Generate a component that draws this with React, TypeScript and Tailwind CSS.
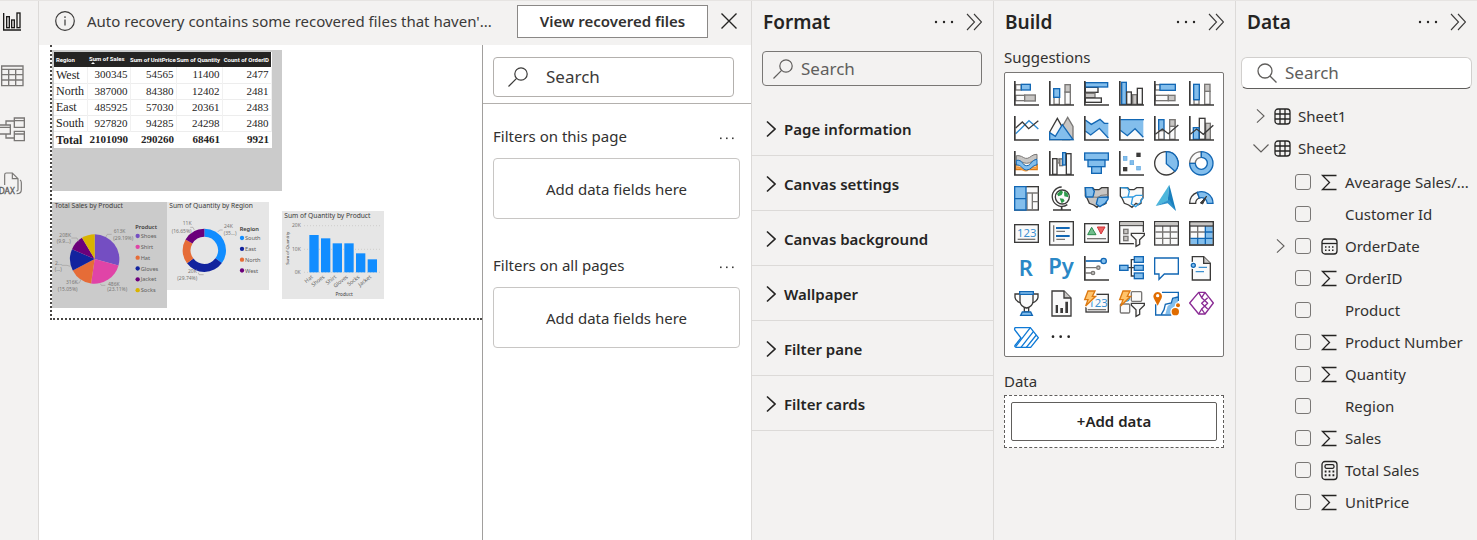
import type { ReactNode } from "react";

const INK = "#3b3a39";
const BLUE = "#1267b4";
const SKY = "#83beec";
const GREY = "#797775";
const SILVER = "#c8c6c4";
const PAPER = "#fafafa";

/* ---------- shared glyphs ---------- */

function Dots({ label }: { label: string }) {
  return (
    <button type="button" aria-label={label} className="flex h-6 w-5 items-center">
      <svg viewBox="0 0 20 4" className="h-1 w-5" fill="#252423">
        <circle cx="2" cy="2" r="1.2" />
        <circle cx="10" cy="2" r="1.2" />
        <circle cx="18" cy="2" r="1.2" />
      </svg>
    </button>
  );
}

function SmallDots({ label }: { label: string }) {
  return (
    <button type="button" aria-label={label} className="flex h-6 w-4 items-center pt-1">
      <svg viewBox="0 0 16 4" className="h-1 w-4" fill="#3b3a39">
        <rect x="1" y="1.5" width="1.6" height="1.6" />
        <rect x="7" y="1.5" width="1.6" height="1.6" />
        <rect x="13" y="1.5" width="1.6" height="1.6" />
      </svg>
    </button>
  );
}

function Collapse() {
  return (
    <button type="button" aria-label="Collapse pane" className="flex h-6 w-4 items-center">
      <svg viewBox="0 0 16 18" className="h-[18px] w-4" fill="none" stroke="#3b3a39" strokeWidth="1.1">
        <path d="M1 1l7.5 8L1 17M8 1l7.5 8L8 17" />
      </svg>
    </button>
  );
}

function Chevron({ className, width }: { className: string; width: string }) {
  return (
    <svg viewBox="0 0 10 18" className={className} fill="none" stroke="currentColor" strokeWidth={width}>
      <path d="M1 1.5l8 7.5-8 7.5" />
    </svg>
  );
}

function SearchLeft({ className }: { className: string }) {
  return (
    <svg viewBox="0 0 20 20" className={className} fill="none" stroke="currentColor" strokeWidth="1.2">
      <circle cx="13" cy="7" r="6.2" />
      <path d="M8.6 11.4L.5 19.5" />
    </svg>
  );
}

/* ---------- navigation rail ---------- */

const railItems: { name: string; art: ReactNode }[] = [
  {
    name: "Report view",
    art: (
      <g stroke="#1b1a19" strokeWidth="4">
        <path d="M11 12V63H63" />
        <rect x="20" y="23" width="8" height="33" />
        <rect x="35" y="33" width="8" height="23" />
        <rect x="51" y="12" width="9" height="44" />
      </g>
    ),
  },
  {
    name: "Table view",
    art: (
      <g stroke="#797775" strokeWidth="4">
        <path d="M5 9H69V68H5ZM5 19H69M5 35H69M5 51H69M26 19V68M47 19V68" />
      </g>
    ),
  },
  {
    name: "Model view",
    art: (
      <g stroke="#797775" strokeWidth="4">
        <path d="M-2 24H31V51H-2ZM-2 31H31M43 3H73V31H43ZM43 11H73M43 43H73V71H43ZM43 51H73M18 24V12H43M18 51V63H43" />
      </g>
    ),
  },
  {
    name: "DAX query view",
    art: (
      <g stroke="#797775" strokeWidth="3.5">
        <path d="M14 42V11Q14 6 19 6H37L54 23V57Q54 60 49 60M37 6V23H54M60 27Q64 29 64 35V56Q64 68 50 68" />
        <text x="-4" y="68" fill="#605e5c" stroke="#605e5c" strokeWidth="1" fontSize="25">
          DAX
        </text>
      </g>
    ),
  },
];

function Rail() {
  return (
    <nav className="flex w-[39px] shrink-0 flex-col gap-[29px] border-r border-[#dcdad8] pt-2">
      {railItems.map((item) => (
        <button key={item.name} type="button" aria-label={item.name} className="h-[25px] w-[25px]">
          <svg viewBox="0 0 75 75" className="h-[25px] w-[25px]" fill="none">
            {item.art}
          </svg>
        </button>
      ))}
    </nav>
  );
}

/* ---------- recovery bar ---------- */

function RecoveryBar() {
  return (
    <div className="flex h-11 items-center pr-[13px] pb-1 pl-4">
      <svg viewBox="0 0 20 20" className="mr-3 size-5 shrink-0" fill="none" stroke="#3b3a39" strokeWidth="1.2">
        <circle cx="10" cy="10" r="9.3" />
        <path d="M10 8.5V14.5M10 5.3V6.9" />
      </svg>
      <span className="min-w-0 flex-1 text-[15px] whitespace-nowrap text-[#3b3a39]">
        Auto recovery contains some recovered files that haven'...
      </span>
      <button
        type="button"
        className="mr-3 h-[33px] w-[191px] shrink-0 border border-[#8a8886] bg-white text-[15px] font-semibold whitespace-nowrap text-[#323130]"
      >
        View recovered files
      </button>
      <button type="button" aria-label="Close" className="shrink-0">
        <svg viewBox="0 0 18 18" className="size-[18px]" stroke="#252423" strokeWidth="1.4">
          <path d="M1.5 1.5l15 15M16.5 1.5l-15 15" />
        </svg>
      </button>
    </div>
  );
}

/* ---------- report canvas ---------- */

const regionRows = [
  ["West", "300345", "54565", "11400", "2477"],
  ["North", "387000", "84380", "12402", "2481"],
  ["East", "485925", "57030", "20361", "2483"],
  ["South", "927820", "94285", "24298", "2480"],
];

function RegionTable() {
  return (
    <div className="absolute top-[5px] left-0 h-[141px] w-[230px] bg-[#cbcbcb] pt-0.5 pl-0.5">
      <table className="w-[217px] table-fixed border-collapse bg-white font-['Liberation_Serif',serif] text-[11px] leading-none text-[#252423]">
        <colgroup>
          <col className="w-[33px]" />
          <col className="w-[43px]" />
          <col className="w-[46px]" />
          <col className="w-[46px]" />
          <col className="w-[49px]" />
        </colgroup>
        <thead>
          <tr className="h-[15px] bg-[#252423] font-['Roboto',sans-serif] text-[6px] whitespace-nowrap text-white">
            <th className="pl-0.5 text-left">Region</th>
            <th className="pl-0.5 text-left">
              Sum of Sales
              <svg viewBox="0 0 4 2" className="ml-0.5 h-0.5 w-1" fill="white">
                <path d="M0 2L2 0L4 2Z" />
              </svg>
            </th>
            <th className="pr-0.5 text-right">Sum of UnitPrice</th>
            <th className="pr-0.5 text-right">Sum of Quantity</th>
            <th className="pr-0.5 text-right">Count of OrderID</th>
          </tr>
        </thead>
        <tbody>
          {regionRows.map((row) => (
            <tr key={row[0]} className="h-4 border-b border-[#ededed]">
              <td className="border-r border-[#f1f1f1] pl-0.5 text-xs leading-none">{row[0]}</td>
              {row.slice(1).map((value) => (
                <td key={value} className="border-r border-[#f1f1f1] pr-0.5 text-right">
                  {value}
                </td>
              ))}
            </tr>
          ))}
        </tbody>
        <tfoot>
          <tr className="h-[17px] border-t border-[#b5cfec] font-bold">
            <td className="pl-0.5 text-xs leading-none">Total</td>
            <td className="pr-0.5 text-right">2101090</td>
            <td className="pr-0.5 text-right">290260</td>
            <td className="pr-0.5 text-right">68461</td>
            <td className="pr-0.5 text-right">9921</td>
          </tr>
        </tfoot>
      </table>
    </div>
  );
}

type Slice = { name: string; share: number; color: string };

const productSlices: Slice[] = [
  { name: "Shoes", share: 29.19, color: "#744ec2" },
  { name: "Shirt", share: 23.11, color: "#e044a7" },
  { name: "Hat", share: 15.05, color: "#e66c37" },
  { name: "Gloves", share: 14.15, color: "#12239e" },
  { name: "Jacket", share: 9.9, color: "#6b007b" },
  { name: "Socks", share: 8.6, color: "#d9b300" },
];

const regionSlices: Slice[] = [
  { name: "South", share: 35, color: "#118dff" },
  { name: "East", share: 29.74, color: "#12239e" },
  { name: "North", share: 18.61, color: "#e66c37" },
  { name: "West", share: 16.65, color: "#6b007b" },
];

function arcs(slices: Slice[], cx: number, cy: number, outer: number, inner: number) {
  let sum = 0;
  return slices.map((slice) => {
    const a = (sum / 100) * Math.PI * 2;
    sum += slice.share;
    const b = (sum / 100) * Math.PI * 2;
    const at = (angle: number, r: number) =>
      `${(cx + Math.sin(angle) * r).toFixed(1)} ${(cy - Math.cos(angle) * r).toFixed(1)}`;
    const d = `M${at(a, outer)}A${outer} ${outer} 0 0 1 ${at(b, outer)}L${at(b, inner)}A${inner} ${inner} 0 0 0 ${at(a, inner)}Z`;
    return <path key={slice.name} d={d} fill={slice.color} />;
  });
}

function Legend({ slices, x, y, step, title }: { slices: Slice[]; x: number; y: number; step: number; title: string }) {
  return (
    <g fill="#605e5c" fontSize="17">
      <text x={x} y={y} fontWeight="600" fill="#3b3a39">
        {title}
      </text>
      {slices.map((slice, i) => (
        <g key={slice.name}>
          <circle cx={x + 7} cy={y + 21 + i * step} r="6.5" fill={slice.color} />
          <text x={x + 16} y={y + 27 + i * step}>
            {slice.name}
          </text>
        </g>
      ))}
    </g>
  );
}

function ProductPie() {
  return (
    <figure className="absolute top-[157px] left-0 h-[106px] w-[115px] bg-[#cbcbcb]">
      <svg viewBox="0 0 345 318" className="h-full w-full">
        <text x="8" y="18" fontSize="20" fill="#3b3a39">
          Total Sales by Product
        </text>
        {arcs(productSlices, 128, 171, 74, 0)}
        <path
          d="M161 105L166 97H179M80 118L75 108H58M55 193L45 190H29M87 232L82 243H74M145 245L148 250H160"
          fill="none"
          stroke="#a19f9d"
          strokeWidth="2"
        />
        <g fontSize="15" fill="#797775">
          <text x="185" y="94">613K</text>
          <text x="184" y="115">(29.19%)</text>
          <text x="22" y="106">208K</text>
          <text x="14" y="124">(9.9...)</text>
          <text x="9" y="188">2...</text>
          <text x="8" y="207">(...)</text>
          <text x="42" y="245">316K</text>
          <text x="17" y="266">(15.05%)</text>
          <text x="168" y="251">486K</text>
          <text x="166" y="268">(23.11%)</text>
        </g>
        <Legend slices={productSlices} x={250} y={81} step={32.5} title="Product" />
      </svg>
    </figure>
  );
}

function RegionDonut() {
  return (
    <figure className="absolute top-[157px] left-[115px] h-[88px] w-[102px] bg-[#e6e6e6]">
      <svg viewBox="0 0 306 264" className="h-full w-full">
        <text x="7" y="18" fontSize="20" fill="#3b3a39">
          Sum of Quantity by Region
        </text>
        {arcs(regionSlices, 112, 145, 65, 41)}
        <path
          d="M152 90L158 84H167M82 84L78 76H70M94 212L96 218H110"
          fill="none"
          stroke="#a19f9d"
          strokeWidth="2"
        />
        <g fontSize="15" fill="#797775">
          <text x="47" y="70">11K</text>
          <text x="14" y="92">(16.65%)</text>
          <text x="171" y="79">24K</text>
          <text x="170" y="100">(35...)</text>
          <text x="63" y="214">20K</text>
          <text x="31" y="235">(29.74%)</text>
        </g>
        <Legend slices={regionSlices} x={218} y={87} step={32.5} title="Region" />
      </svg>
    </figure>
  );
}

const quantityBars = [
  { name: "Hat", top: 72 },
  { name: "Shoes", top: 82 },
  { name: "Shirt", top: 97 },
  { name: "Gloves", top: 97 },
  { name: "Socks", top: 127 },
  { name: "Jacket", top: 145 },
];

function QuantityBars() {
  return (
    <figure className="absolute top-[166px] left-[230px] h-[88px] w-[102px] bg-[#e6e6e6]">
      <svg viewBox="0 0 306 264" className="h-full w-full">
        <text x="7" y="20" fontSize="20" fill="#3b3a39">
          Sum of Quantity by Product
        </text>
        <path d="M66 44H298M66 115H298M66 184H298" stroke="#c4c2c0" strokeWidth="2" strokeDasharray="3 6" />
        <g fontSize="15" fill="#797775">
          <text x="30" y="49">20K</text>
          <text x="30" y="120">10K</text>
          <text x="38" y="189">0K</text>
        </g>
        {quantityBars.map((bar, i) => (
          <g key={bar.name}>
            <rect x={82 + i * 35} y={bar.top} width="28" height={184 - bar.top} fill="#118dff" />
            <text
              transform={`translate(${94 + i * 35} 200) rotate(-38)`}
              textAnchor="end"
              fontSize="16"
              fill="#605e5c"
            >
              {bar.name}
            </text>
          </g>
        ))}
        <text transform="translate(20 112) rotate(-90)" textAnchor="middle" fontSize="13" fill="#3b3a39">
          Sum of Quantity
        </text>
        <text x="186" y="255" textAnchor="middle" fontSize="14" fill="#3b3a39">
          Product
        </text>
      </svg>
    </figure>
  );
}

function Canvas() {
  return (
    <section aria-label="Report canvas" className="min-w-0 flex-1 overflow-hidden bg-white pl-[11px]">
      <div className="relative h-[275px] border-b-2 border-l-2 border-dotted border-[#484644]">
        <RegionTable />
        <ProductPie />
        <RegionDonut />
        <QuantityBars />
      </div>
    </section>
  );
}

/* ---------- filters pane ---------- */

function FilterGroup({ title }: { title: string }) {
  return (
    <section className="pt-5 pb-3.5">
      <div className="flex h-6 items-center justify-between pr-[5px]">
        <h2 className="text-[15px]">{title}</h2>
        <SmallDots label={`${title} options`} />
      </div>
      <div className="mt-2.5 h-[61px] rounded-sm border border-[#c8c6c4] pt-px text-center text-[15px] leading-[59px]">
        Add data fields here
      </div>
    </section>
  );
}

function FiltersPane() {
  return (
    <aside className="w-[269px] shrink-0 border-l border-[#a19f9d] bg-white text-[#323130]">
      <div className="border-b border-[#b3b0ad] pt-3 pr-[17px] pb-1.5 pl-2.5">
        <label className="flex h-10 items-center gap-[18px] rounded-sm border border-[#b3b0ad] px-3.5">
          <SearchLeft className="size-5 shrink-0 text-[#3b3a39]" />
          <input
            aria-label="Search filters"
            placeholder="Search"
            className="w-full min-w-0 text-[17px] outline-none placeholder:text-[#3b3a39]"
          />
        </label>
      </div>
      <div className="pr-[11px] pl-2.5">
        <FilterGroup title="Filters on this page" />
        <FilterGroup title="Filters on all pages" />
      </div>
    </aside>
  );
}

/* ---------- right-hand panes ---------- */

function PaneHeader({ title }: { title: string }) {
  return (
    <header className="flex h-[42px] items-center pr-[11px] pl-[11px]">
      <h1 className="flex-1 text-[19px] font-semibold text-[#252423]">{title}</h1>
      <Dots label={`${title} options`} />
      <span className="w-3" />
      <Collapse />
    </header>
  );
}

const formatSections = [
  "Page information",
  "Canvas settings",
  "Canvas background",
  "Wallpaper",
  "Filter pane",
  "Filter cards",
];

function FormatPane() {
  return (
    <aside className="w-[242px] shrink-0 border-l border-[#dcdad8]">
      <PaneHeader title="Format" />
      <label className="mt-2 mr-[11px] ml-2.5 flex h-[35px] items-center gap-2 rounded-sm border border-[#797775] px-2.5">
        <SearchLeft className="size-5 shrink-0 text-[#605e5c]" />
        <input
          aria-label="Search format options"
          placeholder="Search"
          className="w-full min-w-0 bg-transparent text-[17px] outline-none placeholder:text-[#605e5c]"
        />
      </label>
      <div className="mt-[15px]">
        {formatSections.map((name) => (
          <button
            key={name}
            type="button"
            className="flex h-[55px] w-full items-center gap-2 border-b border-[#dcdad8] pt-0.5 pl-3.5 text-[15px] font-semibold text-[#252423]"
          >
            <Chevron className="h-[18px] w-2.5" width="1.7" />
            {name}
          </button>
        ))}
      </div>
    </aside>
  );
}

const axis = <path d="M2.5 0V72H75" fill="none" stroke={INK} strokeWidth="5" />;
const blueArt = { fill: SKY, stroke: BLUE, strokeWidth: 4 };
const greyArt = { fill: SILVER, stroke: GREY, strokeWidth: 4 };
const inkArt = { fill: PAPER, stroke: INK, strokeWidth: 4 };
const bolt = <path d="M12 0H33L25 16H35L5 45L12 26H2Z" fill="#ffc36b" stroke="#dd7a12" strokeWidth="4" />;
const funnel = (x: number, y: number) => (
  <path
    transform={`translate(${x} ${y})`}
    d="M0 0H39V6L25 19V33L14 39V19L0 6Z"
    {...inkArt}
  />
);

const visuals: { name: string; art: ReactNode }[] = [
  {
    name: "Stacked bar chart",
    art: (
      <>
        <rect x="5" y="11" width="17" height="16" {...greyArt} fill={PAPER} />
        <rect x="22" y="10" width="27" height="17" {...blueArt} />
        <rect x="5" y="43" width="27" height="16" {...greyArt} fill={PAPER} />
        <rect x="32" y="42" width="32" height="18" {...greyArt} />
        {axis}
      </>
    ),
  },
  {
    name: "Stacked column chart",
    art: (
      <>
        <rect x="15" y="48" width="16" height="22" {...greyArt} fill={PAPER} />
        <rect x="14" y="23" width="18" height="26" {...blueArt} />
        <rect x="48" y="33" width="16" height="37" {...greyArt} fill={PAPER} />
        <rect x="48" y="11" width="16" height="22" {...greyArt} />
        {axis}
      </>
    ),
  },
  {
    name: "Clustered bar chart",
    art: (
      <>
        <rect x="4" y="19" width="38" height="15" {...inkArt} />
        <rect x="4" y="5" width="67" height="13" {...blueArt} />
        <rect x="4" y="37" width="29" height="13" {...greyArt} />
        <rect x="4" y="51" width="48" height="13" {...inkArt} />
        {axis}
      </>
    ),
  },
  {
    name: "Clustered column chart",
    art: (
      <>
        <rect x="8" y="4" width="14" height="66" {...blueArt} />
        <rect x="23" y="33" width="14" height="37" {...inkArt} />
        <rect x="41" y="41" width="13" height="29" {...greyArt} />
        <rect x="55" y="22" width="15" height="48" {...inkArt} />
        {axis}
      </>
    ),
  },
  {
    name: "100% stacked bar chart",
    art: (
      <>
        <rect x="4" y="11" width="15" height="16" {...greyArt} fill={PAPER} />
        <rect x="18" y="10" width="46" height="18" {...blueArt} />
        <rect x="4" y="43" width="39" height="16" {...greyArt} fill={PAPER} />
        <rect x="43" y="43" width="20" height="16" {...greyArt} />
        {axis}
      </>
    ),
  },
  {
    name: "100% stacked column chart",
    art: (
      <>
        <rect x="15" y="56" width="15" height="14" {...greyArt} fill={PAPER} />
        <rect x="14" y="10" width="17" height="46" {...blueArt} />
        <rect x="47" y="31" width="16" height="39" {...greyArt} fill={PAPER} />
        <rect x="47" y="10" width="16" height="21" {...greyArt} />
        {axis}
      </>
    ),
  },
  {
    name: "Line chart",
    art: (
      <g fill="none" strokeWidth="4">
        <path d="M5 53L45 14L59 26L73 39" stroke="#2e8ad0" />
        <path d="M5 36L25 18L44 38L73 14" stroke={INK} />
        {axis}
      </g>
    ),
  },
  {
    name: "Area chart",
    art: (
      <>
        <path d="M41 30L56 4L72 31V71H41Z" {...greyArt} />
        <path d="M2 48L25 7L61 71H2Z" {...inkArt} />
        <path d="M2 50L19 61L40 26L72 71H2Z" {...blueArt} />
      </>
    ),
  },
  {
    name: "Stacked area chart",
    art: (
      <>
        <path d="M4 12L22 25L48 10L61 22H73V66L46 37L20 57L4 45Z" fill={SKY} />
        <path d="M4 45L20 57L46 37L73 66V71H4Z" fill={PAPER} />
        <path d="M4 12L22 25L48 10L61 22H73M4 45L20 57L46 37L73 66" fill="none" stroke={BLUE} strokeWidth="4" />
        {axis}
      </>
    ),
  },
  {
    name: "100% stacked area chart",
    art: (
      <>
        <path d="M4 11H73V62L47 37L25 59L4 42Z" fill={SKY} />
        <path d="M4 44L25 60L48 38L73 64V71H4Z" fill={PAPER} />
        <path d="M4 11H75M4 43L25 59L48 38L73 64" fill="none" stroke={BLUE} strokeWidth="4" />
        {axis}
      </>
    ),
  },
  {
    name: "Line and stacked column chart",
    art: (
      <>
        <rect x="14" y="11" width="16" height="59" {...blueArt} />
        <rect x="14" y="44" width="16" height="26" {...greyArt} fill={PAPER} />
        <rect x="47" y="11" width="16" height="59" {...greyArt} fill={PAPER} />
        <rect x="47" y="11" width="16" height="20" {...greyArt} />
        <path d="M4 55L25 39L43 53L73 27" fill="none" stroke={INK} strokeWidth="4" />
        {axis}
      </>
    ),
  },
  {
    name: "Line and clustered column chart",
    art: (
      <>
        <rect x="50" y="22" width="14" height="48" {...greyArt} />
        <rect x="31" y="7" width="17" height="63" {...inkArt} />
        <rect x="13" y="35" width="17" height="35" {...blueArt} />
        <path d="M4 55L23 39L43 55L73 28" fill="none" stroke={INK} strokeWidth="4" />
        {axis}
      </>
    ),
  },
  {
    name: "Ribbon chart",
    art: (
      <>
        <path d="M5 41H28V55H5ZM48 41H69V55H48Z" fill="#fff" stroke="#dd7a12" strokeWidth="5" />
        <path d="M7 50C26 45 30 66 42 55S54 50 69 50" fill="none" stroke="#f59a3a" strokeWidth="7" />
        <path
          d="M7 14H15C28 16 30 24 40 22S55 9 69 10V24C58 27 50 37 38 37S20 28 7 28Z"
          {...greyArt}
          strokeWidth="3"
        />
        <path
          d="M7 28C27 25 24 44 38 44S51 27 69 25V41C56 42 51 57 38 57S22 40 7 42Z"
          {...blueArt}
          strokeWidth="3"
        />
        {axis}
      </>
    ),
  },
  {
    name: "Waterfall chart",
    art: (
      <>
        <rect x="11" y="23" width="13" height="47" {...inkArt} />
        <rect x="26" y="24" width="11" height="12" {...greyArt} />
        <rect x="32" y="24" width="9" height="20" {...greyArt} />
        <rect x="41" y="5" width="9" height="37" {...blueArt} />
        <rect x="52" y="8" width="14" height="62" {...inkArt} />
        {axis}
      </>
    ),
  },
  {
    name: "Funnel chart",
    art: (
      <>
        <rect x="2" y="6" width="71" height="21" {...blueArt} />
        <rect x="12" y="27" width="51" height="20" {...blueArt} />
        <rect x="23" y="47" width="29" height="20" {...blueArt} />
      </>
    ),
  },
  {
    name: "Scatter chart",
    art: (
      <>
        <rect x="13" y="16" width="11" height="12" {...blueArt} stroke="#5ea5df" strokeWidth="2" />
        <rect x="33" y="29" width="11" height="12" {...blueArt} stroke="#5ea5df" strokeWidth="2" />
        <rect x="53" y="46" width="11" height="11" {...blueArt} stroke="#5ea5df" strokeWidth="2" />
        <rect x="52" y="5" width="13" height="13" fill={INK} />
        <rect x="12" y="48" width="13" height="13" fill={INK} />
        {axis}
      </>
    ),
  },
  {
    name: "Pie chart",
    art: (
      <>
        <circle cx="37" cy="37" r="35" {...inkArt} />
        <path d="M37 2A35 35 0 0 1 63 61L37 38Z" {...blueArt} />
      </>
    ),
  },
  {
    name: "Donut chart",
    art: (
      <>
        <path
          d="M37 2A35 35 0 0 0 2 37H19A18 18 0 0 1 37 19Z"
          fill={PAPER}
          stroke={GREY}
          strokeWidth="4"
        />
        <path d="M37 2A35 35 0 1 1 2 37H19A18 18 0 1 0 37 19Z" {...blueArt} />
      </>
    ),
  },
  {
    name: "Treemap",
    art: (
      <>
        <rect x="2" y="2" width="71" height="70" {...inkArt} />
        <path d="M37 21H73M55 23V70M39 23V70M55 47H73" fill="none" stroke={GREY} strokeWidth="4" />
        <path d="M2 2H36V72H2ZM2 38H36" {...blueArt} />
      </>
    ),
  },
  {
    name: "Map",
    art: (
      <>
        <path d="M38 3A29 29 0 1 0 55 56" fill="none" stroke={INK} strokeWidth="4" />
        <path d="M38 61V72M12 72H66" fill="none" stroke={INK} strokeWidth="5" />
        <circle cx="40" cy="33" r="21" {...inkArt} />
        <path d="M24 24L36 13L42 18L38 27L28 31ZM45 16L56 22L58 34L46 31ZM32 37L43 38L47 45L38 52Z" fill="#2c9a4b" />
      </>
    ),
  },
  {
    name: "Filled map",
    art: (
      <>
        <path d="M4 5H26L31 11L45 11L53 5H72V36L66 42V52L58 56L51 52L39 64L29 57L16 52L9 36L4 30Z" {...greyArt} stroke={INK} />
        <path d="M4 5H25L31 16L27 33H6Z" {...blueArt} />
        <path d="M37 54L42 34L72 33V40L64 51L48 62Z" {...blueArt} />
        <path d="M27 33L42 34L51 28L72 26" fill="none" stroke={GREY} strokeWidth="3" />
      </>
    ),
  },
  {
    name: "Shape map",
    art: (
      <>
        <path d="M4 5H26L31 11L45 11L53 5H72V36L66 42V52L58 56L51 52L39 64L29 57L16 52L9 36L4 30Z" {...inkArt} />
        <path
          d="M5 5L25 6L31 16L27 33L9 35M27 33L42 33L51 28L71 28M41 34L37 54L50 62L64 50L72 34"
          fill="none"
          stroke="#2f9ae0"
          strokeWidth="4"
        />
      </>
    ),
  },
  {
    name: "Azure map",
    art: (
      <>
        <path d="M46 -4L5 60L41 45Z" fill="#4db7dc" />
        <path d="M46 -4L66 75L41 45Z" fill="#197fbd" />
        <path d="M5 60L46 41L66 75L41 52Z" fill="#2f93cc" />
      </>
    ),
  },
  {
    name: "Gauge",
    art: (
      <>
        <path d="M2 52A35 35 0 0 1 25 19L31 36A17 17 0 0 0 20 52Z" {...inkArt} />
        <path d="M25 19A35 35 0 0 1 72 52H55A18 18 0 0 0 31 36Z" {...blueArt} />
        <path d="M34 51L53 30L41 54Z" fill={INK} stroke={INK} strokeWidth="3" />
      </>
    ),
  },
  {
    name: "Card",
    art: (
      <>
        <rect x="2" y="11" width="71" height="53" {...inkArt} />
        <text x="9" y="47" fontSize="34" fill="#3a8fd0">123</text>
        <path d="M11 55H64" stroke={GREY} strokeWidth="4" />
      </>
    ),
  },
  {
    name: "Multi-row card",
    art: (
      <>
        <rect x="2" y="2" width="71" height="70" {...inkArt} />
        <path d="M14 13V62M22 31H48M22 55H48" stroke={GREY} strokeWidth="4" />
        <path d="M21 21H62M21 45H62" stroke={BLUE} strokeWidth="6" />
      </>
    ),
  },
  {
    name: "KPI",
    art: (
      <>
        <rect x="2" y="8" width="71" height="56" {...inkArt} />
        <path d="M11 41L23 19L36 41Z" fill="#70bd8c" stroke="#2c8a4b" strokeWidth="3" />
        <path d="M40 18H63L51 39Z" fill="#ed6060" stroke="#d13438" strokeWidth="3" />
        <path d="M9 53H66" stroke={GREY} strokeWidth="4" />
      </>
    ),
  },
  {
    name: "Slicer",
    art: (
      <>
        <rect x="2" y="2" width="71" height="66" {...inkArt} />
        <rect x="4" y="4" width="67" height="9" fill={SILVER} />
        <path d="M2 14H73" stroke={INK} strokeWidth="3" />
        <rect x="14" y="25" width="13" height="13" {...greyArt} />
        <rect x="14" y="46" width="13" height="13" {...greyArt} />
        <path d="M34 33H78V78H48Z" fill="#fff" />
        {funnel(37, 37)}
      </>
    ),
  },
  {
    name: "Table",
    art: (
      <>
        <rect x="2" y="2" width="71" height="70" {...inkArt} />
        <rect x="4" y="4" width="67" height="9" fill={SILVER} />
        <path d="M4 33H71M4 52H71M26 15V70M49 15V70" stroke={GREY} strokeWidth="4" />
        <path d="M2 15H73" stroke={INK} strokeWidth="4" />
      </>
    ),
  },
  {
    name: "Matrix",
    art: (
      <>
        <rect x="2" y="2" width="71" height="70" {...inkArt} />
        <rect x="4" y="4" width="67" height="9" fill={SILVER} />
        <path d="M49 15H71V70H4V52H49Z" fill={SKY} />
        <path d="M4 33H49M26 15V52" stroke={GREY} strokeWidth="4" />
        <path d="M49 15V70M4 52H71M49 33H71M26 52V70" stroke={BLUE} strokeWidth="4" />
        <path d="M2 15H73" stroke={INK} strokeWidth="4" />
        <rect x="2" y="2" width="71" height="70" fill="none" stroke={INK} strokeWidth="4" />
      </>
    ),
  },
  {
    name: "R script visual",
    art: (
      <text x="14" y="61" fontSize="66" fontWeight="600" fill="#2b88c6">
        R
      </text>
    ),
  },
  {
    name: "Python visual",
    art: (
      <text x="-2" y="54" fontSize="66" fontWeight="600" fill="#2b88c6">
        Py
      </text>
    ),
  },
  {
    name: "Key influencers",
    art: (
      <>
        <path d="M5 15H52" stroke={BLUE} strokeWidth="5" />
        <path d="M5 35H38M5 51H22" stroke={GREY} strokeWidth="4" />
        <circle cx="59" cy="15" r="8" {...blueArt} />
        <circle cx="43" cy="35" r="5" {...greyArt} />
        <circle cx="27" cy="51" r="5" {...greyArt} />
        {axis}
      </>
    ),
  },
  {
    name: "Decomposition tree",
    art: (
      <>
        <path d="M26 35H46M46 11H37V60H46" fill="none" stroke={INK} strokeWidth="4" />
        <rect x="2" y="28" width="25" height="15" {...blueArt} />
        <rect x="46" y="2" width="27" height="17" {...blueArt} />
        <rect x="46" y="28" width="27" height="15" {...blueArt} />
        <rect x="46" y="51" width="27" height="17" {...blueArt} />
      </>
    ),
  },
  {
    name: "Q&A",
    art: <path d="M2 6H73V54H31L15 70V54H2Z" fill="#fff" stroke={BLUE} strokeWidth="4" />,
  },
  {
    name: "Narrative",
    art: (
      <>
        <path d="M10 2H44L64 22V72H10Z" {...inkArt} />
        <path d="M44 2V22H64" fill={SILVER} stroke={INK} strokeWidth="4" />
        <path d="M29 34H54M20 47H45" stroke="#3a8fd0" strokeWidth="4" />
        <circle cx="12" cy="28" r="11" fill="#fff" />
        <circle cx="13" cy="28" r="6" {...blueArt} />
      </>
    ),
  },
  {
    name: "Goals",
    art: (
      <>
        <path d="M18 9H3V19Q4 30 20 36M57 9H72V19Q70 30 55 36" fill="none" stroke={INK} strokeWidth="4" />
        <path d="M31 50H44V63H31Z" fill={PAPER} stroke={INK} strokeWidth="4" />
        <path d="M18 5H57V32Q55 48 38 51Q20 48 18 32Z" {...inkArt} />
        <path d="M17 2H58V10H17ZM25 63H50L55 73H20Z" {...blueArt} />
      </>
    ),
  },
  {
    name: "Paginated report",
    art: (
      <>
        <path d="M9 0H45L66 21V75H9Z" {...inkArt} />
        <path d="M45 0V21H66" fill={SILVER} stroke={INK} strokeWidth="4" />
        <path d="M20 42H27V66H20ZM34 51H42V66H34ZM49 32H57V66H49Z" fill={INK} />
      </>
    ),
  },
  {
    name: "New card",
    art: (
      <>
        <rect x="6" y="10" width="67" height="53" {...inkArt} />
        <text x="13" y="48" fontSize="34" fill="#3a8fd0">123</text>
        <path d="M11 56H66" stroke={GREY} strokeWidth="4" />
        <path d="M0 -2H36L38 16L8 50L0 46Z" fill="#fff" />
        {bolt}
      </>
    ),
  },
  {
    name: "New slicer",
    art: (
      <>
        <rect x="37" y="2" width="31" height="29" rx="3" {...greyArt} fill={PAPER} />
        <rect x="4" y="39" width="28" height="27" rx="3" {...greyArt} fill={PAPER} />
        <path d="M20 30Q31 32 31 20" fill="none" stroke="#2f9ae0" strokeWidth="4" />
        {bolt}
        {funnel(37, 37)}
      </>
    ),
  },
  {
    name: "ArcGIS map",
    art: (
      <>
        <path d="M5 4H73V72H5Z" fill="#fff" />
        <path d="M71 16L61 23L57 23L53 36L41 45L34 69H55L62 44L72 40Z" fill={SKY} />
        <path d="M24 4H73V30M5 40V72H52M72 18L56 22L52 36L34 40L30 56L22 70" fill="none" stroke={BLUE} strokeWidth="4" />
        <path d="M11 44L-1 21A13 13 0 1 1 23 21Z" fill="#e06c00" />
        <circle cx="11" cy="14" r="5" fill="#fff" />
        <circle cx="64" cy="62" r="15" fill="#fff" />
        <circle cx="72" cy="43" r="9" fill="#fff" />
        <circle cx="64" cy="62" r="11" fill="#e06c00" />
        <circle cx="72" cy="43" r="6" fill="#e06c00" />
      </>
    ),
  },
  {
    name: "Power Apps",
    art: (
      <g fill="none" stroke="#8a2a94" strokeWidth="4" strokeLinejoin="round">
        <path d="M2 36L29 4H48L73 36L48 69H29Z" />
        <path d="M38 20L56 37L38 54M56 20L38 37L56 54" />
        <path d="M29 4L38 20L48 4M29 69L38 54L48 69" />
      </g>
    ),
  },
  {
    name: "Power Automate",
    art: (
      <g fill="none" stroke="#0f7ad6" strokeWidth="4">
        <path d="M4 5H49L73 35L50 64H6Q0 62 4 57L21 36L2 11Q1 7 4 5Z" />
        <path d="M49 5L5 62M58 17L21 64M67 27L37 64" />
      </g>
    ),
  },
  {
    name: "Get more visuals",
    art: (
      <g fill="#252423">
        <circle cx="12" cy="32" r="4" />
        <circle cx="35" cy="32" r="4" />
        <circle cx="59" cy="32" r="4" />
      </g>
    ),
  },
];

function BuildPane() {
  return (
    <aside className="w-[242px] shrink-0 border-l border-[#dcdad8] text-[#323130]">
      <PaneHeader title="Build" />
      <div className="pr-[11px] pl-2.5">
        <h2 className="pt-0.5 text-[15px] leading-6">Suggestions</h2>
        <div className="mt-[3px] grid grid-cols-6 rounded-xs border border-[#797775] bg-white px-1 pt-[3px]">
          {visuals.map((visual) => (
            <button
              key={visual.name}
              type="button"
              aria-label={visual.name}
              title={visual.name}
              className="grid h-[35px] place-items-center"
            >
              <svg viewBox="0 0 75 75" className="size-[25px] overflow-visible">
                {visual.art}
              </svg>
            </button>
          ))}
        </div>
        <h2 className="pt-3 pb-0.5 text-[15px] leading-6">Data</h2>
        <div className="border border-dashed border-[#605e5c] bg-white p-1.5">
          <button
            type="button"
            className="h-[39px] w-full rounded-xs border border-[#605e5c] text-[15px] font-semibold text-[#252423]"
          >
            +Add data
          </button>
        </div>
      </div>
    </aside>
  );
}

/* ---------- data pane ---------- */

function SheetIcon() {
  return (
    <svg viewBox="0 0 17 17" className="mr-[7px] size-[17px] shrink-0" fill="none" stroke="#252423" strokeWidth="1.3">
      <rect x="1" y="1" width="15" height="15" rx="3" />
      <path d="M6 1V16M11 1V16M1 6H16M1 11H16" />
    </svg>
  );
}

const kindArt: Record<string, ReactNode> = {
  sum: <path d="M15.5 1.5H1.5L8.5 8.5L1.5 15.5H15.5" />,
  date: (
    <>
      <rect x="1" y="1" width="15" height="15" rx="3" />
      <path d="M1 5.5H16" />
      <path d="M7.5 9H9M11 9H12.5M4 12.3H5.5M7.5 12.3H9M11 12.3H12.5M4 9H5.5" strokeWidth="1.6" />
    </>
  ),
  calc: (
    <>
      <rect x="1" y="-.5" width="15" height="18" rx="3" />
      <rect x="4" y="2.7" width="9" height="3.6" rx="1.5" />
      <path d="M3.7 9.5H5.5M7.6 9.5H9.4M11.5 9.5H13.3M3.7 13.3H5.5M7.6 13.3H9.4M11.5 13.3H13.3" strokeWidth="1.9" />
    </>
  ),
  none: null,
};

const fields = [
  { name: "Avearage Sales/...", kind: "sum" },
  { name: "Customer Id", kind: "none" },
  { name: "OrderDate", kind: "date" },
  { name: "OrderID", kind: "sum" },
  { name: "Product", kind: "none" },
  { name: "Product Number", kind: "sum" },
  { name: "Quantity", kind: "sum" },
  { name: "Region", kind: "none" },
  { name: "Sales", kind: "sum" },
  { name: "Total Sales", kind: "calc" },
  { name: "UnitPrice", kind: "sum" },
];

function DataPane() {
  return (
    <aside className="w-[242px] shrink-0 overflow-hidden border-l border-[#dcdad8] text-[#323130]">
      <PaneHeader title="Data" />
      <label className="mr-[5px] ml-[5px] mt-3.5 flex h-8 items-center gap-2 rounded-md border border-[#d1cfcd] border-b-[#605e5c] bg-white px-[15px]">
        <svg viewBox="0 0 20 20" className="size-5 shrink-0" fill="none" stroke="#605e5c" strokeWidth="1.3">
          <circle cx="8" cy="8" r="7" />
          <path d="M13 13L19.5 19.5" />
        </svg>
        <input
          aria-label="Search data"
          placeholder="Search"
          className="w-full min-w-0 text-[17px] outline-none placeholder:text-[#605e5c]"
        />
      </label>
      <div className="mt-[11px] text-[15px]">
        <div className="flex h-8 items-center pl-5">
          <button type="button" aria-label="Expand Sheet1" className="mr-[9px]">
            <Chevron className="h-4 w-[9px] text-[#605e5c]" width="1.2" />
          </button>
          <SheetIcon />
          Sheet1
        </div>
        <div className="flex h-8 items-center pl-[17px]">
          <button type="button" aria-label="Collapse Sheet2" className="mr-[5px]">
            <svg viewBox="0 0 16 9" className="h-[9px] w-4" fill="none" stroke="#605e5c" strokeWidth="1.2">
              <path d="M.5 .5L8 8L15.5 .5" />
            </svg>
          </button>
          <SheetIcon />
          Sheet2
        </div>
        <ul className="pt-0.5">
          {fields.map((field) => (
            <li key={field.name} className="flex h-8 items-center whitespace-nowrap">
              <span className="flex w-[59px] shrink-0 justify-end pr-2.5">
                {field.kind === "date" && (
                  <button type="button" aria-label="Expand OrderDate">
                    <Chevron className="h-4 w-[9px] text-[#605e5c]" width="1.2" />
                  </button>
                )}
              </span>
              <label className="flex items-center">
                <input
                  type="checkbox"
                  className="size-4 shrink-0 appearance-none rounded-[3px] border border-[#797775]"
                />
                <svg
                  viewBox="0 0 17 17"
                  className="mr-[7px] ml-2.5 size-[17px] shrink-0 overflow-visible"
                  fill="none"
                  stroke="#252423"
                  strokeWidth="1.3"
                >
                  {kindArt[field.kind]}
                </svg>
                {field.name}
              </label>
            </li>
          ))}
        </ul>
      </div>
    </aside>
  );
}

export default function App() {
  return (
    <div className="flex min-h-screen border-t border-[#e6e4e2] bg-[#f3f2f1] font-['Noto_Sans',sans-serif]">
      <Rail />
      <main className="flex min-w-0 flex-1 flex-col">
        <RecoveryBar />
        <div className="flex flex-1">
          <Canvas />
          <FiltersPane />
        </div>
      </main>
      <FormatPane />
      <BuildPane />
      <DataPane />
    </div>
  );
}
